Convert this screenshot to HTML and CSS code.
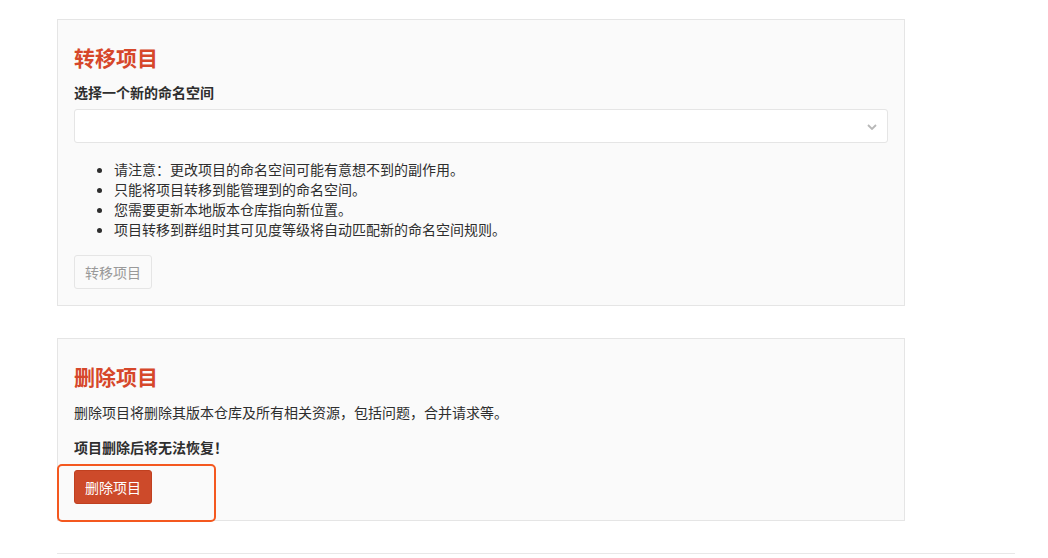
FILE: index.html
```html
<!DOCTYPE html>
<html lang="zh-CN">
<head>
  <meta charset="UTF-8">
  <meta name="viewport" content="width=device-width, initial-scale=1.0">
  <title>项目设置</title>
  <link rel="stylesheet" href="styles.css">
</head>
<body>
  <div class="content">
    <section class="panel">
      <h4 class="danger-title">转移项目</h4>
      <label class="field-label" for="namespace">选择一个新的命名空间</label>
      <div class="select-wrap">
        <select id="namespace" name="namespace"></select>
        <svg class="chevron" width="10" height="6" viewBox="0 0 10 6">
          <path d="M1 1 L5 5 L9 1" fill="none" stroke="#b8b8b8" stroke-width="1.8"/>
        </svg>
      </div>
      <ul class="notes">
        <li>请注意：更改项目的命名空间可能有意想不到的副作用。</li>
        <li>只能将项目转移到能管理到的命名空间。</li>
        <li>您需要更新本地版本仓库指向新位置。</li>
        <li>项目转移到群组时其可见度等级将自动匹配新的命名空间规则。</li>
      </ul>
      <button class="btn" disabled>转移项目</button>
    </section>

    <section class="panel">
      <h4 class="danger-title">删除项目</h4>
      <p class="desc">删除项目将删除其版本仓库及所有相关资源，包括问题，合并请求等。</p>
      <p class="desc strong">项目删除后将无法恢复！</p>
      <div class="action">
        <button class="btn btn-remove">删除项目</button>
        <span class="highlight"></span>
      </div>
    </section>

    <hr class="divider">
  </div>
</body>
</html>
```

FILE: styles.css
```css
body {
  margin: 0;
  font-family: "Noto Sans CJK SC", "Liberation Sans", sans-serif;
  font-size: 14px;
  line-height: 20px;
  color: #2e2e2e;
  background: #fff;
}

.content {
  width: 958px;
  padding: 19px 0 0 57px;
}

.panel {
  width: 814px;
  padding: 16px;
  background-color: #fafafa;
  border: 1px solid #e5e5e5;
  margin-bottom: 32px;
}

.danger-title {
  margin: 10px 0 13px;
  font-size: 21px;
  line-height: 23px;
  font-weight: bold;
  color: #d6472a;
}

.field-label {
  display: block;
  font-weight: bold;
  margin-bottom: 7px;
}

.select-wrap {
  position: relative;
}

select {
  -webkit-appearance: none;
  appearance: none;
  display: block;
  width: 100%;
  height: 34px;
  background: #fff;
  border: 1px solid #e5e5e5;
  border-radius: 3px;
  outline: none;
}

.chevron {
  position: absolute;
  right: 11px;
  top: 15px;
}

.notes {
  margin: 16px 0;
  padding-left: 40px;
}

.btn {
  -webkit-appearance: none;
  appearance: none;
  display: block;
  height: 34px;
  padding: 0 10px;
  font-family: inherit;
  font-size: 14px;
  line-height: 20px;
  color: #999;
  background: #fafafa;
  border: 1px solid #e5e5e5;
  border-radius: 3px;
}

.desc {
  margin: 14px 0 15px;
}

.desc.strong {
  font-weight: bold;
  margin: 0 0 13px;
}

.action {
  position: relative;
}

.btn-remove {
  color: #fff;
  background-color: #cd4a2a;
  border-color: #c0401f;
  cursor: pointer;
}

/* annotation box drawn over the delete button */
.highlight {
  position: absolute;
  left: -17px;
  top: -6px;
  width: 155px;
  height: 54px;
  border: 2px solid #f4581f;
  border-radius: 5px;
}

.divider {
  margin: 0;
  border: none;
  border-top: 1px solid #e8e8e8;
  margin-top: 1px;
}
```
